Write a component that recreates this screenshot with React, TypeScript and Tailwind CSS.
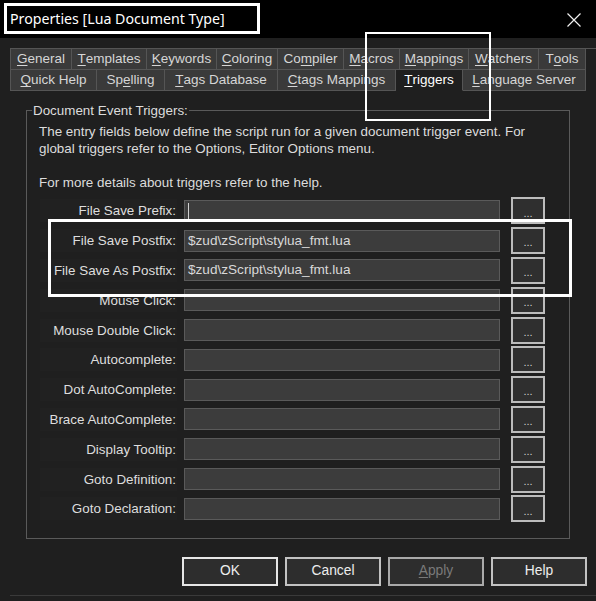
import React from "react"

type Tab = { t: string; u: number; w: number; active?: boolean }

const row1: Tab[] = [
  { t: "General", u: 0, w: 61 },
  { t: "Templates", u: 0, w: 75 },
  { t: "Keywords", u: 0, w: 70 },
  { t: "Coloring", u: 0, w: 61 },
  { t: "Compiler", u: 2, w: 66 },
  { t: "Macros", u: 0, w: 56 },
  { t: "Mappings", u: 0, w: 69 },
  { t: "Watchers", u: 0, w: 70 },
  { t: "Tools", u: 1, w: 47 },
]

const row2: Tab[] = [
  { t: "Quick Help", u: 0, w: 86 },
  { t: "Spelling", u: 2, w: 68 },
  { t: "Tags Database", u: 0, w: 113 },
  { t: "Ctags Mappings", u: 0, w: 118 },
  { t: "Triggers", u: 0, w: 67, active: true },
  { t: "Language Server", u: 0, w: 123 },
]

const triggers = [
  { label: "File Save Prefix:", value: "", caret: true },
  { label: "File Save Postfix:", value: "$zud\\zScript\\stylua_fmt.lua" },
  { label: "File Save As Postfix:", value: "$zud\\zScript\\stylua_fmt.lua" },
  { label: "Mouse Click:", value: "" },
  { label: "Mouse Double Click:", value: "" },
  { label: "Autocomplete:", value: "" },
  { label: "Dot AutoComplete:", value: "" },
  { label: "Brace AutoComplete:", value: "" },
  { label: "Display Tooltip:", value: "" },
  { label: "Goto Definition:", value: "" },
  { label: "Goto Declaration:", value: "" },
]

// texto con la letra de acceso subrayada
function Mnemo({ t, u }: { t: string; u: number }) {
  return (
    <>
      {t.slice(0, u)}
      <span className="underline underline-offset-[2px] decoration-1">{t[u]}</span>
      {t.slice(u + 1)}
    </>
  )
}

function TabRow({ tabs, top }: { tabs: Tab[]; top?: boolean }) {
  return (
    <div className={`ml-[10px] flex border-l border-[#555555] ${top ? "border-t" : ""}`}>
      {tabs.map(tab => (
        <div
          key={tab.t}
          style={{ width: tab.w }}
          className={`flex h-[21px] items-center justify-center border-r pt-px ${
            tab.active
              ? "border-b border-r-[#555555] border-b-transparent bg-[#1f1f1f] text-white"
              : "border-b border-[#555555] bg-[#3a3a3a] text-[#d6d6d6]"
          }`}
        >
          <Mnemo t={tab.t} u={tab.u} />
        </div>
      ))}
    </div>
  )
}

function Btn({ label, u, primary, disabled }: { label: string; u?: number; primary?: boolean; disabled?: boolean }) {
  return (
    <button
      className={`h-[29px] w-[96px] border-2 bg-[#2d2d2d] text-[13.8px] ${
        primary
          ? "border-[#e6e6e6] text-[#ededed]"
          : disabled
            ? "border-[#a9a9a9] text-[#7a7a7a]"
            : "border-[#c2c2c2] text-[#ededed]"
      }`}
    >
      {u !== undefined ? <Mnemo t={label} u={u} /> : label}
    </button>
  )
}

export default function App() {
  return (
    <div
      className="relative flex h-[601px] w-[596px] flex-col overflow-hidden bg-[#1f1f1f] text-[13.4px] text-[#dcdcdc]"
      style={{ fontFamily: '"Liberation Sans", Arial, sans-serif' }}
    >
      {/* Barra de título */}
      <div className="flex h-[38px] shrink-0 items-start justify-between bg-black">
        <div className="ml-[4px] mt-[3px] flex h-[31px] w-[256px] items-center border-[3px] border-white pl-[3px] text-[14.2px] text-white [font-family:'Noto_Sans',sans-serif]">
          Properties [Lua Document Type]
        </div>
        <svg width="14" height="14" viewBox="0 0 14 14" className="mr-[15px] mt-[13px]">
          <path d="M0.5 0.5 L13.5 13.5 M13.5 0.5 L0.5 13.5" stroke="#f0f0f0" strokeWidth="1.2" fill="none" />
        </svg>
      </div>

      {/* Pestañas */}
      <div className="mt-[10px] text-[13.5px]">
        <TabRow tabs={row1} top />
        <TabRow tabs={row2} />
      </div>

      {/* Grupo de disparadores */}
      <fieldset className="ml-[26px] mt-[11px] h-[437px] w-[544px] border border-[#5a5a5a]">
        <legend className="ml-[5px] px-[1px] leading-[17px]">Document Event Triggers:</legend>
        <p className="whitespace-nowrap pl-[12px] pt-[4px] leading-[17px]">
          The entry fields below define the script run for a given document trigger event. For
          <br />
          global triggers refer to the Options, Editor Options menu.
          <br />
          <br />
          For more details about triggers refer to the help.
        </p>
        <div className="mt-[5px] flex flex-col">
          {triggers.map(r => (
            <div key={r.label} className="flex h-[29.8px] items-center">
              <div className="ml-[13px] h-[23px] w-[137px] bg-[#212121] pr-[1px] text-right leading-[23px] text-[#dedede]">
                {r.label}
              </div>
              <div className="ml-[7px] flex h-[22px] w-[316px] items-center border border-[#5a5a5a] bg-[#3c3c3c] pl-[3px] text-[13.6px] text-[#d8d8d8]">
                {r.caret && <span className="h-[16px] w-px bg-[#d0d0d0]" />}
                {r.value}
              </div>
              <button className="ml-[11px] flex h-[27px] w-[34px] items-center justify-center border-2 border-[#bcbcbc] bg-[#2f2f2f] pt-[4px] text-[11px] text-[#cfcfcf]">
                ...
              </button>
            </div>
          ))}
        </div>
      </fieldset>

      {/* Botones */}
      <div className="ml-[182px] mt-[18px] flex gap-[7px]">
        <Btn label="OK" primary />
        <Btn label="Cancel" />
        <Btn label="Apply" u={0} disabled />
        <Btn label="Help" />
      </div>
      <div className="ml-[10px] mt-[9px] h-px bg-[#3a3a3a]" />

      {/* Recuadros de anotación */}
      <div className="absolute left-[365px] top-[32px] h-[89px] w-[126px] border-2 border-white" />
      <div className="absolute left-[48px] top-[219px] h-[78px] w-[524px] border-[3px] border-white" />
    </div>
  )
}
